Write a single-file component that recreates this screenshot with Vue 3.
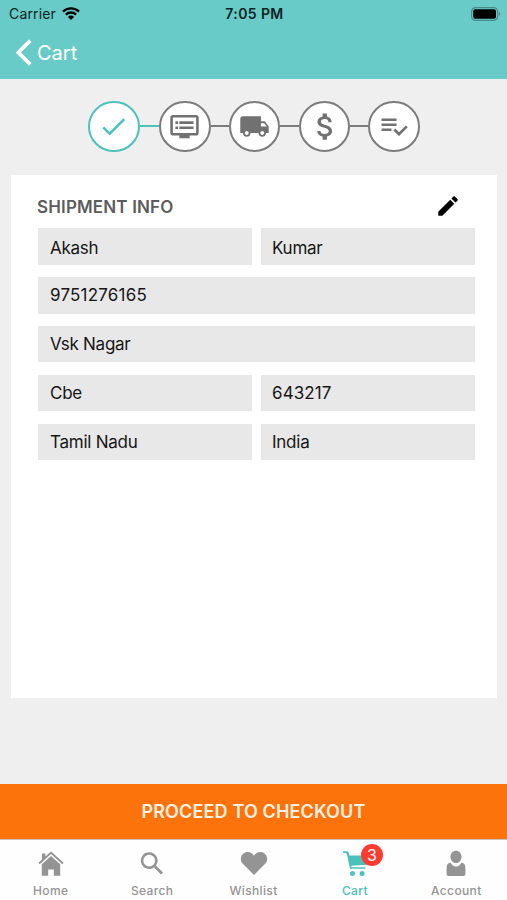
<template>
  <div class="screen">
    <header class="header">
      <div class="status-bar">
        <div class="carrier">
          <span>Carrier</span>
          <svg class="wifi" viewBox="0 0 18 13">
            <path d="M1 4.6a11.4 11.4 0 0 1 16 0" />
            <path d="M3.9 7.6a7.3 7.3 0 0 1 10.2 0" />
            <path class="wifi-dot" d="M9 13 5.9 9.9a4.4 4.4 0 0 1 6.2 0z" />
          </svg>
        </div>
        <span class="time">7:05 PM</span>
        <svg class="battery" viewBox="0 0 30 14">
          <rect class="battery-shell" x=".6" y=".6" width="26" height="12.8" rx="4" />
          <rect x="2.2" y="2.2" width="22.8" height="9.6" rx="2" />
          <path class="battery-tip" d="M28 4.8q2.6 2.2 0 4.4z" />
        </svg>
      </div>
      <button class="back">
        <svg viewBox="0 0 16 26"><path d="M14.5 1.5 3 13l11.5 11.5" /></svg>
        <span>Cart</span>
      </button>
    </header>

    <main class="content">
      <div class="stepper">
        <template v-for="(step, index) in steps" :key="step.name">
          <span v-if="index" class="line" :class="{ active: index === 1 }"></span>
          <div class="step" :class="[step.name, { active: step.done }]">
            <svg viewBox="0 0 24 24"><path :d="step.icon" /></svg>
          </div>
        </template>
      </div>

      <section class="card">
        <div class="card-header">
          <h2>SHIPMENT INFO</h2>
          <svg class="edit" viewBox="0 0 24 24">
            <path d="M3 17.25V21h3.75L17.81 9.94l-3.75-3.75L3 17.25zM20.71 7.04c.39-.39.39-1.02 0-1.41l-2.34-2.34c-.39-.39-1.02-.39-1.41 0l-1.83 1.83 3.75 3.75 1.83-1.83z" />
          </svg>
        </div>
        <div class="fields">
          <div
            v-for="field in fields"
            :key="field.name"
            class="field"
            :class="[field.name, { full: field.full }]"
          >
            <span>{{ field.value }}</span>
          </div>
        </div>
      </section>
    </main>

    <button class="checkout">PROCEED TO CHECKOUT</button>

    <nav class="tabs">
      <div v-for="tab in tabs" :key="tab.label" class="tab" :class="{ active: tab.active }">
        <div class="tab-icon">
          <svg viewBox="0 0 28 28"><path :d="tab.icon" fill-rule="evenodd" /></svg>
          <span v-if="tab.badge" class="badge">{{ tab.badge }}</span>
        </div>
        <span class="tab-label">{{ tab.label }}</span>
      </div>
    </nav>
  </div>
</template>

<script setup>
import { ref } from "vue";

const steps = ref([
  {
    name: "done",
    done: true,
    icon: "M9 16.17L4.83 12l-1.42 1.41L9 19 21 7l-1.41-1.41z",
  },
  {
    name: "details",
    icon: "M21 3H3c-1.1 0-2 .9-2 2v12c0 1.1.9 2 2 2h5v2h8v-2h5c1.1 0 1.99-.9 1.99-2L23 5c0-1.1-.9-2-2-2zm0 14H3V5h18v12zm-2-9H8v2h11V8zm0 4H8v2h11v-2zM7 8H5v2h2V8zm0 4H5v2h2v-2z",
  },
  {
    name: "shipping",
    icon: "M20 8h-3V4H3c-1.1 0-2 .9-2 2v11h2c0 1.66 1.34 3 3 3s3-1.34 3-3h6c0 1.66 1.34 3 3 3s3-1.34 3-3h2v-5l-3-4zM6 18.5c-.83 0-1.5-.67-1.5-1.5s.67-1.5 1.5-1.5 1.5.67 1.5 1.5-.67 1.5-1.5 1.5zm13.5-9l1.96 2.5H17V9.5h2.5zm-1.5 9c-.83 0-1.5-.67-1.5-1.5s.67-1.5 1.5-1.5 1.5.67 1.5 1.5-.67 1.5-1.5 1.5z",
  },
  {
    name: "payment",
    icon: "M11.8 10.9c-2.27-.59-3-1.2-3-2.15 0-1.09 1.01-1.85 2.7-1.85 1.78 0 2.44.85 2.5 2.1h2.21c-.07-1.72-1.12-3.3-3.21-3.81V3h-3v2.16c-1.94.42-3.5 1.68-3.5 3.61 0 2.31 1.91 3.46 4.7 4.13 2.5.6 3 1.48 3 2.41 0 .69-.49 1.79-2.7 1.79-2.06 0-2.87-.92-2.98-2.1h-2.2c.12 2.19 1.76 3.42 3.68 3.83V21h3v-2.15c1.95-.37 3.5-1.5 3.5-3.55 0-2.84-2.43-3.81-4.7-4.4z",
  },
  {
    name: "review",
    icon: "M14 10H2v2h12v-2zm0-4H2v2h12V6zM2 16h8v-2H2v2zm19.5-4.5L23 13l-6.99 7-4.51-4.5L13 14l3.01 3 5.49-5.5z",
  },
]);

const fields = ref([
  { name: "first-name", value: "Akash" },
  { name: "last-name", value: "Kumar" },
  { name: "phone", value: "9751276165", full: true },
  { name: "street", value: "Vsk Nagar", full: true },
  { name: "city", value: "Cbe" },
  { name: "pincode", value: "643217" },
  { name: "state", value: "Tamil Nadu" },
  { name: "country", value: "India" },
]);

const tabs = ref([
  {
    label: "Home",
    icon: "M14 1.4 26.6 12.8l-1.3 1.5L14 4.1 2.7 14.3l-1.3-1.5L5 9.5V3.4h3.4v3zM14 6l9.2 8.3v11.4h-6.4v-6.3h-5.6v6.3H4.8V14.3z",
  },
  {
    label: "Search",
    icon: "M11.2 2.2a8.4 8.4 0 1 0 4.8 15.3l7 7 2-2-7-7A8.4 8.4 0 0 0 11.2 2.2zm0 2.5a5.9 5.9 0 1 1 0 11.8 5.9 5.9 0 0 1 0-11.8z",
  },
  {
    label: "Wishlist",
    icon: "M14 25 2.6 13.5C-.9 9.8 1 3 6.8 2c3-.4 5.7 1 7.2 3.8C15.5 3 18.2 1.6 21.2 2c5.8 1 7.7 7.8 4.2 11.5z",
  },
  {
    label: "Cart",
    active: true,
    badge: 3,
    icon: "M2 1.2h3.5c1.5 0 2.1.9 2.4 2.3l.4 1.9H26v9.4l-15.8 1 .3 1.4h14v1.6H9L6.1 4.9c-.3-1.2-.7-1.8-1.7-1.9H2zM11.4 20.9a2.5 2.5 0 1 1 0 5 2.5 2.5 0 0 1 0-5zm9.7 0a2.5 2.5 0 1 1 0 5 2.5 2.5 0 0 1 0-5z",
  },
  {
    label: "Account",
    icon: "M14 .8c3.2 0 5.5 2.5 5.5 5.9S17.2 13.1 14 13.1 8.5 10.1 8.5 6.7 10.8.8 14 .8zM8.3 12.6C9.8 14.8 11.7 16.7 14 16.7s4.2-1.9 5.7-4.1c2.4.7 3.7 2.5 3.7 5.1v6.4c0 1.2-.7 2-1.9 2h-15c-1.2 0-1.9-.8-1.9-2v-6.4c0-2.6 1.3-4.4 3.7-5.1z",
  },
]);
</script>

<style>
body {
  margin: 0;
}
</style>

<style scoped>
.screen {
  display: flex;
  flex-direction: column;
  width: 507px;
  height: 900px;
  overflow: hidden;
  background-color: #efefef;
  font-family: Inter, "Liberation Sans", sans-serif;
}

button {
  border: 0;
  padding: 0;
  background: none;
  font-family: inherit;
}

.header {
  height: 79.4px;
  flex: none;
  background-color: #68cbc7;
}

.status-bar {
  display: grid;
  grid-template-columns: 1fr auto 1fr;
  align-items: center;
  height: 27px;
  padding: 0 6px 0 9px;
  font-size: 14px;
  color: #0b2423;
}

.carrier {
  display: flex;
  align-items: center;
  gap: 6px;
  letter-spacing: 0.15px;
}

.wifi {
  width: 18px;
  height: 13px;
  fill: none;
  stroke: #000;
  stroke-width: 2.3;
}

.wifi-dot {
  fill: #000;
  stroke: none;
}

.time {
  margin-right: 1px;
  font-weight: 600;
  letter-spacing: 0.4px;
}

.battery {
  justify-self: end;
  width: 30px;
  height: 14px;
}

.battery-shell {
  fill: none;
  stroke: #478b88;
  stroke-width: 1.2;
}

.battery-tip {
  fill: #478b88;
}

.back {
  display: flex;
  align-items: center;
  gap: 5px;
  height: 51px;
  padding-left: 15px;
  font-size: 20px;
  color: #fff;
}

.back svg {
  width: 17px;
  height: 27px;
  fill: none;
  stroke: #fff;
  stroke-width: 3.6;
}

.content {
  flex: 1;
}

.stepper {
  display: flex;
  align-items: center;
  justify-content: center;
  height: 51px;
  padding: 21.6px 0 23.5px 1px;
}

.step {
  display: flex;
  align-items: center;
  justify-content: center;
  box-sizing: border-box;
  width: 51.5px;
  height: 51.5px;
  border: 2px solid #7c7c7c;
  border-radius: 50%;
  background-color: #fff;
}

.step svg {
  width: 31px;
  height: 31px;
  fill: #717171;
}

.step.active {
  border-color: #4bc1bb;
}

.step.active svg {
  fill: #4bc1bb;
}

.step.payment svg {
  width: 35px;
  height: 35px;
  margin-left: 2px;
}

.step.review svg {
  width: 30px;
  height: 30px;
}

.line {
  width: 18.2px;
  height: 2px;
  background-color: #7c7c7c;
}

.line.active {
  width: 19.5px;
  background-color: #4bc1bb;
}

.card {
  box-sizing: border-box;
  width: 486px;
  height: 522.5px;
  margin-left: 11px;
  padding: 19px 22px 0 27px;
  background-color: #fff;
}

.card-header {
  display: flex;
  align-items: center;
  justify-content: space-between;
  height: 26px;
  margin-bottom: 8px;
  padding-right: 14px;
}

.card-header h2 {
  margin: 0 0 0 -1px;
  font-size: 17px;
  font-weight: 600;
  line-height: 26px;
  letter-spacing: 0.15px;
  color: #5c5c5c;
}

.edit {
  width: 26px;
  height: 26px;
  margin-top: -2px;
}

.fields {
  display: grid;
  grid-template-columns: 1fr 1fr;
  gap: 12.5px 9px;
}

.field {
  display: flex;
  align-items: center;
  box-sizing: border-box;
  height: 36.3px;
  padding-left: 12px;
  background-color: #e8e8e8;
  font-size: 17px;
  letter-spacing: -0.25px;
  color: #161616;
}

.field.full {
  grid-column: span 2;
}

.field.first-name,
.field.last-name {
  padding-top: 2px;
}

.field.last-name,
.field.pincode,
.field.country {
  padding-left: 11px;
}

.field.phone {
  letter-spacing: 0.2px;
}

.field.pincode {
  letter-spacing: 0.1px;
}

.checkout {
  flex: none;
  height: 54.5px;
  padding-top: 1px;
  background-color: #fd730b;
  color: #fdf1e4;
  font-size: 18px;
  font-weight: 600;
  letter-spacing: 0.15px;
}

.tabs {
  display: flex;
  flex: none;
  box-sizing: border-box;
  height: 61.5px;
  border-top: 1px solid #c9c4bf;
  background-color: #fefefe;
}

.tab {
  flex: 1;
  display: flex;
  flex-direction: column;
  align-items: center;
  padding-top: 10px;
  color: #949494;
}

.tab.active {
  color: #4bc1bb;
}

.tab-icon {
  position: relative;
  height: 28px;
}

.tab-icon svg {
  width: 28px;
  height: 28px;
  fill: currentColor;
}

.badge {
  position: absolute;
  top: -6px;
  left: 20px;
  width: 22px;
  height: 22px;
  border-radius: 50%;
  background-color: #fc3b31;
  color: #fff;
  font-size: 16px;
  line-height: 22px;
  text-align: center;
}

.tab-label {
  margin-top: 5px;
  font-size: 12px;
  font-weight: 500;
  line-height: 16px;
  letter-spacing: 0.35px;
}
</style>
